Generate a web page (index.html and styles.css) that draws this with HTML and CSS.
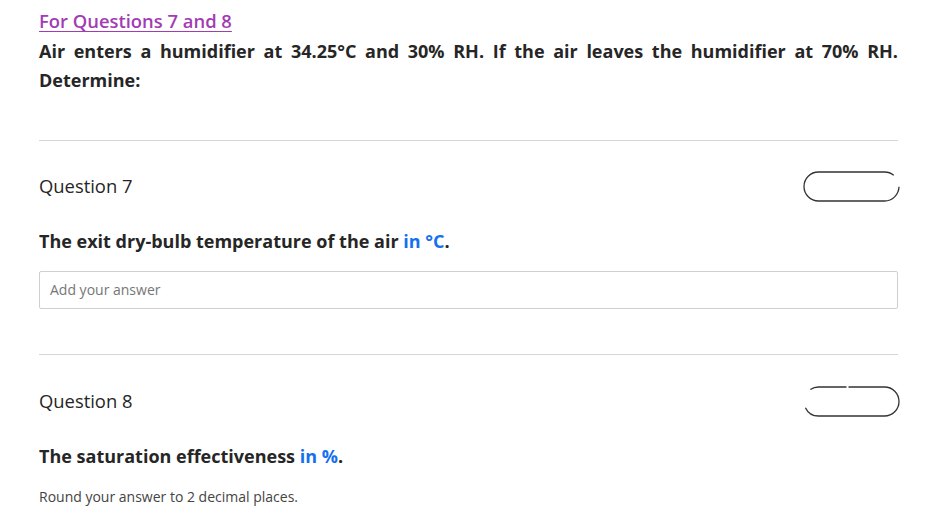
FILE: index.html
```html
<!DOCTYPE html>
<html>
<head>
<meta charset="utf-8">
<link rel="stylesheet" href="styles.css">
</head>
<body>
<div class="page">
  <section class="intro">
    <a class="intro-link" href="#">For Questions 7 and 8</a>
    <p class="intro-text">Air enters a humidifier at 34.25°C and 30% RH. If the air leaves the humidifier at 70% RH. Determine:</p>
  </section>

  <section class="question">
    <div class="q-head">
      <span class="q-title">Question 7</span>
      <svg class="pill" width="97" height="31" viewBox="0 0 97 31">
        <rect x="1" y="1" width="95" height="29" rx="14.5" ry="14.5" fill="none" stroke="#333" stroke-width="1.3" stroke-dasharray="76 13 140"/>
      </svg>
    </div>
    <p class="q-text">The exit dry-bulb temperature of the air <span class="unit">in °C</span>.</p>
    <div class="answer">Add your answer</div>
  </section>

  <section class="question">
    <div class="q-head">
      <span class="q-title">Question 8</span>
      <svg class="pill" width="97" height="31" viewBox="0 0 97 31">
        <rect x="1" y="1" width="95" height="29" rx="14.5" ry="14.5" fill="none" stroke="#333" stroke-width="1.3" stroke-dasharray="28 2 163.5 20.4 9.1"/>
      </svg>
    </div>
    <p class="q-text">The saturation effectiveness <span class="unit">in %</span>.</p>
    <p class="hint">Round your answer to 2 decimal places.</p>
  </section>
</div>
</body>
</html>
```

FILE: styles.css
```css
* { box-sizing: border-box; }
html, body { margin: 0; padding: 0; background: #fff; }
body {
  font-family: "Open Sans", "Noto Sans", sans-serif;
  color: #262626;
}
.page {
  width: 859px;
  margin-left: 39px;
}
.intro {
  padding-top: 9px;
  padding-bottom: 45px;
  border-bottom: 1px solid #d6d6d6;
}
.intro-link {
  display: block;
  width: max-content;
  font-size: 18.4px;
  font-weight: 600;
  line-height: 24px;
  color: #a23cb4;
  text-decoration: underline;
  text-underline-offset: 3px;
}
.intro-text {
  margin: 3.5px 0 0;
  font-size: 18px;
  font-weight: 700;
  line-height: 29px;
  text-align: justify;
  color: #262626;
}
.question {
  padding-top: 31px;
}
.question + .question {
  border-top: 1px solid #d6d6d6;
  margin-top: 45px;
  padding-top: 32px;
}
.q-head {
  display: flex;
  align-items: center;
  justify-content: space-between;
  height: 29px;
}
.q-title {
  font-size: 18.4px;
  line-height: 24px;
  color: #262626;
}
.pill {
  display: block;
  margin-right: -2px;
}
.q-text {
  margin: 28px 0 0;
  font-size: 18px;
  font-weight: 700;
  line-height: 24px;
}
.unit { color: #1570ef; }
.answer {
  margin-top: 18px;
  height: 38px;
  border: 1px solid #cfcfcf;
  border-radius: 2px;
  padding: 0 10px;
  display: flex;
  align-items: center;
  font-size: 14px;
  color: #767676;
}
.hint {
  margin: 19px 0 0;
  font-size: 14px;
  line-height: 20px;
  color: #444;
}
```
